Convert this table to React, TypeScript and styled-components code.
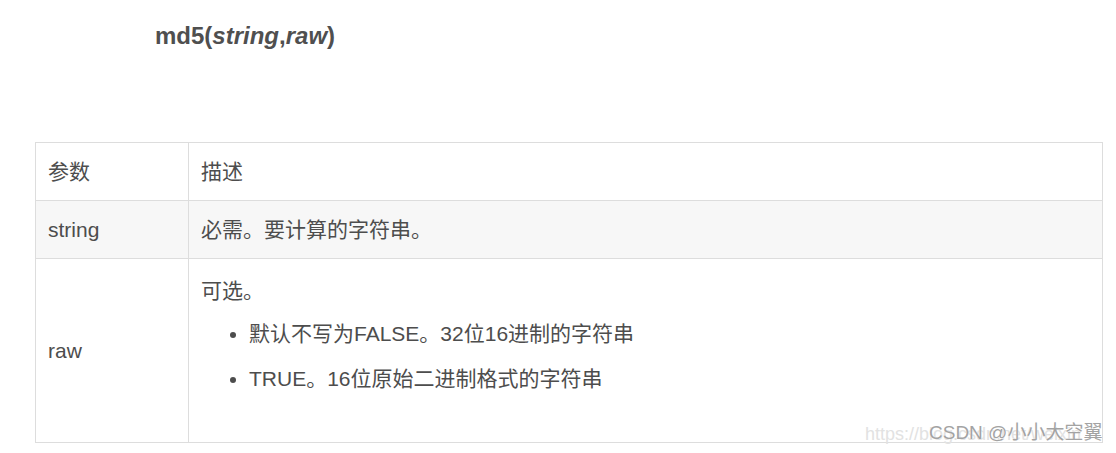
import styled, { createGlobalStyle } from 'styled-components';

const GlobalStyle = createGlobalStyle`
  html, body {
    margin: 0;
    padding: 0;
    background: #fff;
  }
  body {
    font-family: 'Liberation Sans', Arial, 'Noto Sans CJK SC', sans-serif;
    color: #4d4d4d;
  }
`;

const Page = styled.div`
  position: relative;
  width: 1116px;
  height: 453px;
  padding: 21px 0 0 35px;
  box-sizing: border-box;
  overflow: hidden;
`;

const Title = styled.h3`
  margin: 0 0 91px 120px;
  font-size: 24px;
  line-height: 30px;
  font-weight: bold;
  color: #4f4f4f;

  em {
    font-style: italic;
  }
`;

const Table = styled.table`
  width: 1068px;
  border-collapse: collapse;
  font-size: 21px;
  color: #4d4d4d;
`;

const Row = styled.tr<{ shaded?: boolean }>`
  background: ${({ shaded }) => (shaded ? '#f7f7f7' : '#fff')};
`;

const Cell = styled.td<{ narrow?: boolean }>`
  width: ${({ narrow }) => (narrow ? '128px' : 'auto')};
  border: 1px solid #dddddd;
  padding: 14px 12px;
  line-height: 29px;
  vertical-align: middle;
  text-align: left;
`;

const Note = styled.p`
  margin: 3px 0 14px;
`;

const List = styled.ul`
  margin: 0 0 35px;
  padding-left: 48px;
  list-style: disc;

  li + li {
    margin-top: 16px;
  }
`;

const Watermark = styled.div`
  position: absolute;
  left: 865px;
  top: 421px;
  white-space: nowrap;
  line-height: 24px;
`;

const Url = styled.span`
  position: absolute;
  left: 0;
  top: 1px;
  font-size: 18px;
  color: #e2e2e2;
`;

const Credit = styled.span`
  position: relative;
  margin-left: 64px;
  font-size: 19px;
  color: #a3a3a3;
  text-shadow: 0 0 1px #fff;
`;

export default function App() {
  return (
    <Page>
      <GlobalStyle />
      <Title>
        md5(<em>string</em>,<em>raw</em>)
      </Title>
      <Table>
        <tbody>
          <Row>
            <Cell narrow>参数</Cell>
            <Cell>描述</Cell>
          </Row>
          <Row shaded>
            <Cell narrow>string</Cell>
            <Cell>必需。要计算的字符串。</Cell>
          </Row>
          <Row>
            <Cell narrow>raw</Cell>
            <Cell>
              <Note>可选。</Note>
              <List>
                <li>默认不写为FALSE。32位16进制的字符串</li>
                <li>TRUE。16位原始二进制格式的字符串</li>
              </List>
            </Cell>
          </Row>
        </tbody>
      </Table>
      <Watermark>
        <Url>https://blog.csdn.net/weixin</Url>
        <Credit>CSDN @小小大空翼</Credit>
      </Watermark>
    </Page>
  );
}
